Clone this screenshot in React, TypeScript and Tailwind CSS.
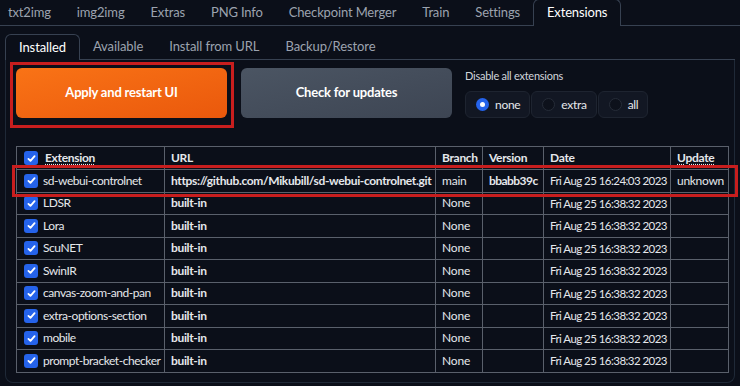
import React from "react";

const topTabs = ["txt2img", "img2img", "Extras", "PNG Info", "Checkpoint Merger", "Train", "Settings", "Extensions"];
const subTabs = ["Installed", "Available", "Install from URL", "Backup/Restore"];

const rows = [
  { name: "sd-webui-controlnet", url: "https://github.com/Mikubill/sd-webui-controlnet.git", branch: "main", version: "bbabb39c", date: "Fri Aug 25 16:24:03 2023", update: "unknown" },
  { name: "LDSR", url: "built-in", branch: "None", version: "", date: "Fri Aug 25 16:38:32 2023", update: "" },
  { name: "Lora", url: "built-in", branch: "None", version: "", date: "Fri Aug 25 16:38:32 2023", update: "" },
  { name: "ScuNET", url: "built-in", branch: "None", version: "", date: "Fri Aug 25 16:38:32 2023", update: "" },
  { name: "SwinIR", url: "built-in", branch: "None", version: "", date: "Fri Aug 25 16:38:32 2023", update: "" },
  { name: "canvas-zoom-and-pan", url: "built-in", branch: "None", version: "", date: "Fri Aug 25 16:38:32 2023", update: "" },
  { name: "extra-options-section", url: "built-in", branch: "None", version: "", date: "Fri Aug 25 16:38:32 2023", update: "" },
  { name: "mobile", url: "built-in", branch: "None", version: "", date: "Fri Aug 25 16:38:32 2023", update: "" },
  { name: "prompt-bracket-checker", url: "built-in", branch: "None", version: "", date: "Fri Aug 25 16:38:32 2023", update: "" },
];

function Check() {
  return (
    <span className="inline-flex w-[14px] h-[14px] shrink-0 items-center justify-center rounded-[3px] bg-[#2563eb]">
      <svg viewBox="0 0 16 16" className="w-[11px] h-[11px]" fill="none" stroke="white" strokeWidth="2.6" strokeLinecap="round" strokeLinejoin="round">
        <path d="M3.5 8.5l3 3 6-7" />
      </svg>
    </span>
  );
}

function Radio({ label, checked }: { label: string; checked?: boolean }) {
  return (
    <div className="flex items-center gap-[6px] h-[27px] pl-[10px] pr-[9px] rounded-md border border-[#1e2430] bg-[#121723]">
      <span className={checked ? "w-[13px] h-[13px] rounded-full bg-[#2563eb] flex items-center justify-center" : "w-[13px] h-[13px] rounded-full bg-[#0d111b] border border-[#262c38]"}>
        {checked && <span className="w-[5px] h-[5px] rounded-full bg-white" />}
      </span>
      <span className="text-[12px] tracking-[-0.3px] text-[#e5e7eb]">{label}</span>
    </div>
  );
}

const cell = "border border-[#5a606b] px-[6px] text-left";

export default function App() {
  return (
    <div className="relative w-[740px] h-[386px] overflow-hidden bg-[#0b0f19] text-[#e5e7eb] font-['Lato',sans-serif]">
      {/* main tabs */}
      <div className="flex h-[26px] border-b border-[#374151] ml-[-5px]">
        {topTabs.map((t) => (
          <div
            key={t}
            className={
              t === "Extensions"
                ? "px-[13px] flex items-center text-[13px] tracking-[-0.15px] text-white border border-[#374151] border-b-0 rounded-t-md bg-[#0b0f19] mb-[-1px] mt-[-1px]"
                : "px-[13px] flex items-center text-[13px] tracking-[-0.15px] text-[#9ca3af]"
            }
          >
            {t}
          </div>
        ))}
      </div>

      <div className="px-[5px] pt-[8px]">
        {/* sub tabs */}
        <div className="flex h-[26px] border-b border-[#374151]">
          {subTabs.map((t) => (
            <div
              key={t}
              className={
                t === "Installed"
                  ? "px-[13px] flex items-center text-[13px] tracking-[-0.1px] text-white border border-[#374151] border-b-0 rounded-t-md bg-[#0b0f19] mb-[-1px]"
                  : "px-[13px] flex items-center text-[13px] tracking-[-0.1px] text-[#9ca3af]"
              }
            >
              {t}
            </div>
          ))}
        </div>

        {/* panel */}
        <div className="h-[323px] border border-t-0 border-[#1f2937] rounded-b-lg px-[10px] pt-[8px]">
          <div className="flex gap-[14px] h-[50px]">
            <button className="w-[211px] h-[50px] rounded-md bg-gradient-to-br from-[#f97316] to-[#ea580c] text-white font-bold text-[13px] tracking-[-0.2px]">
              Apply and restart UI
            </button>
            <button className="w-[211px] h-[50px] rounded-md bg-gradient-to-br from-[#4b5563] to-[#3d4553] text-white font-bold text-[13px] tracking-[-0.2px]">
              Check for updates
            </button>
            <div className="flex flex-col gap-[7px] ml-[-1px]">
              <div className="h-[16px] leading-[16px] text-[11px] tracking-[-0.25px] text-[#d1d5db]">Disable all extensions</div>
              <div className="flex gap-[1px]">
                <Radio label="none" checked />
                <Radio label="extra" />
                <Radio label="all" />
              </div>
            </div>
          </div>

          <table className="mt-[28px] table-fixed border-collapse text-[12px] w-[712px]">
            <colgroup>
              <col className="w-[148px]" />
              <col className="w-[271px]" />
              <col className="w-[47px]" />
              <col className="w-[61px]" />
              <col className="w-[127px]" />
              <col className="w-[58px]" />
            </colgroup>
            <thead>
              <tr className="h-[23px] font-bold tracking-[-0.3px]">
                <th className={cell + " pl-[7px]"}>
                  <div className="flex items-center gap-[7px]">
                    <Check />
                    <span className="underline decoration-dotted underline-offset-2">Extension</span>
                  </div>
                </th>
                <th className={cell}>URL</th>
                <th className={cell}>Branch</th>
                <th className={cell}>Version</th>
                <th className={cell}>Date</th>
                <th className={cell}>
                  <span className="underline decoration-dotted underline-offset-2">Update</span>
                </th>
              </tr>
            </thead>
            <tbody>
              {rows.map((r) => (
                <tr key={r.name} className="h-[22.5px]">
                  <td className={cell + " pl-[7px] whitespace-nowrap"}>
                    <div className="flex items-center gap-[5px]">
                      <Check />
                      <span className="tracking-[-0.45px]">{r.name}</span>
                    </div>
                  </td>
                  <td className={cell + " font-bold whitespace-nowrap tracking-[-0.35px]"}>{r.url}</td>
                  <td className={cell + " tracking-[-0.2px]"}>{r.branch}</td>
                  <td className={cell + " font-bold tracking-[-0.55px]"}>{r.version}</td>
                  <td className={cell + " whitespace-nowrap text-[11.5px] tracking-[-0.55px]"}>{r.date}</td>
                  <td className={cell + " tracking-[-0.3px]"}>{r.update}</td>
                </tr>
              ))}
            </tbody>
          </table>
        </div>
      </div>

      {/* annotation boxes */}
      <div className="absolute left-[10px] top-[62px] w-[224px] h-[66px] border-[3px] border-[#c81e1e] pointer-events-none" />
      <div className="absolute left-[12px] top-[165px] w-[726px] h-[32px] border-[3px] border-[#c81e1e] pointer-events-none" />
    </div>
  );
}
